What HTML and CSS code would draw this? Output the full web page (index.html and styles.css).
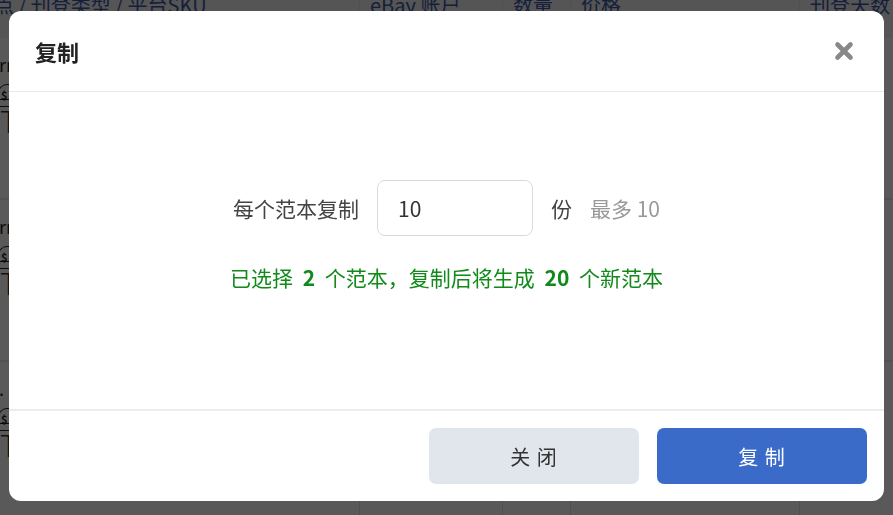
FILE: index.html
```html
<!DOCTYPE html>
<html lang="zh-CN">
<head>
    <meta charset="UTF-8">
    <meta name="viewport" content="width=device-width, initial-scale=1.0">
    <title>复制范本</title>
    <link rel="stylesheet" href="styles.css">
</head>
<body>

<div class="page">
    <div class="table">
        <div class="thead">
            <div class="th c1">站点 / 刊登类型 / 平台SKU</div>
            <div class="th c2">eBay 账户</div>
            <div class="th c3">数量</div>
            <div class="th c4">价格</div>
            <div class="th c5">刊登天数</div>
        </div>
        <div class="trow">
            <div class="td c1">
                <span class="frag-name">rn</span>
                <span class="tag">$</span>
                <span class="frag-t">T</span>
            </div>
            <div class="td c2"></div>
            <div class="td c3"></div>
            <div class="td c4"></div>
            <div class="td c5"></div>
        </div>
        <div class="trow">
            <div class="td c1">
                <span class="frag-name">rn</span>
                <span class="tag">$</span>
                <span class="frag-t">T</span>
            </div>
            <div class="td c2"></div>
            <div class="td c3"></div>
            <div class="td c4"></div>
            <div class="td c5"></div>
        </div>
        <div class="trow">
            <div class="td c1">
                <span class="frag-name">.</span>
                <span class="tag">$</span>
                <span class="frag-t">T</span>
            </div>
            <div class="td c2"></div>
            <div class="td c3"></div>
            <div class="td c4"></div>
            <div class="td c5"></div>
        </div>
    </div>
</div>

<div class="mask">
    <div class="modal">
        <div class="modal-head">
            <h2>复制</h2>
            <button class="close" type="button" aria-label="关闭">
                <svg width="20" height="20" viewBox="0 0 20 20">
                    <path d="M3.5 3.5 L16.5 16.5 M16.5 3.5 L3.5 16.5" stroke="#888" stroke-width="4.6" stroke-linecap="round" fill="none"/>
                </svg>
            </button>
        </div>
        <div class="modal-body">
            <div class="copy-row">
                <label for="copyCount">每个范本复制</label>
                <input type="text" id="copyCount" value="10">
                <span>份</span>
                <span class="hint">最多 10</span>
            </div>
            <p class="summary">已选择 <b>2</b> 个范本，复制后将生成 <b>20</b> 个新范本</p>
        </div>
        <div class="modal-foot">
            <button class="btn btn-gray" type="button">关 闭</button>
            <button class="btn btn-primary" type="button">复 制</button>
        </div>
    </div>
</div>

</body>
</html>
```

FILE: styles.css
```css
body { margin: 0; font-family: "Noto Sans CJK SC", "Noto Sans", sans-serif; background: #fff; overflow: hidden; }

/* page behind the dialog */
.page { height: 515px; overflow: hidden; }
.table { margin: -22px 0 0 -36px; width: 1000px; }
.thead, .trow { display: grid; grid-template-columns: 396px 143px 68px 229px 164px; }
.thead { height: 60px; background: #f2f2f2; }
.th { padding: 0 10px; font-size: 20px; line-height: 54px; color: #3d5aa8; white-space: nowrap; border-right: 1px solid #e6e6e6; }
.trow { height: 160px; border-bottom: 2px solid #ececec; }
.td { border-right: 1px solid #e6e6e6; padding: 0 10px; }
.td.c1 { display: flex; flex-direction: column; align-items: flex-start; }
.frag-name { margin: 14px 0 0 25px; font-size: 18px; line-height: 24px; color: #222; }
.tag { margin: 8px 0 0 24px; width: 30px; height: 16px; border: 1.5px solid #222; border-radius: 9px 9px 0 0; font-size: 11px; font-weight: bold; line-height: 20px; padding-left: 2px; box-sizing: border-box; color: #222; }
.frag-t { margin: 6px 0 0 26px; font-size: 30px; line-height: 26px; font-weight: 300; color: #333; border-top: 1.5px solid #222; width: 40px; }

/* dialog */
.mask { position: fixed; inset: 0; background: rgba(0, 0, 0, 0.65); }
.modal { margin: 11px auto 0; width: 875px; background: #fff; border-radius: 12px; overflow: hidden; }
.modal-head { height: 80px; display: flex; align-items: center; justify-content: space-between; padding: 0 30px 0 26px; border-bottom: 1px solid #e8e8e8; }
.modal-head h2 { margin: 0; font-size: 22px; font-weight: bold; color: #222; }
.close { border: none; background: none; padding: 0; cursor: pointer; display: flex; }

.modal-body { padding: 88px 0 117px; border-bottom: 2px solid #ececec; }
.copy-row { display: flex; align-items: center; justify-content: center; gap: 18px; font-size: 21px; color: #444; }
.copy-row input { width: 156px; height: 56px; box-sizing: border-box; border: 1px solid #d9d9d9; border-radius: 8px; padding: 0 20px; font-family: inherit; font-size: 21px; color: #333; outline: none; }
.copy-row .hint { color: #999; }
.summary { margin: 26px 0 0; text-align: center; font-size: 21px; line-height: 30px; color: #118a1a; }
.summary b { margin: 0 5px; }

.modal-foot { display: flex; justify-content: flex-end; gap: 18px; padding: 17px 17px 17px; }
.btn { width: 210px; height: 56px; border: none; border-radius: 7px; font-family: inherit; font-size: 20px; letter-spacing: 1px; cursor: pointer; }
.btn-gray { background: #e1e5ec; color: #333; }
.btn-primary { background: #3b6bc9; color: #fff; }
```
